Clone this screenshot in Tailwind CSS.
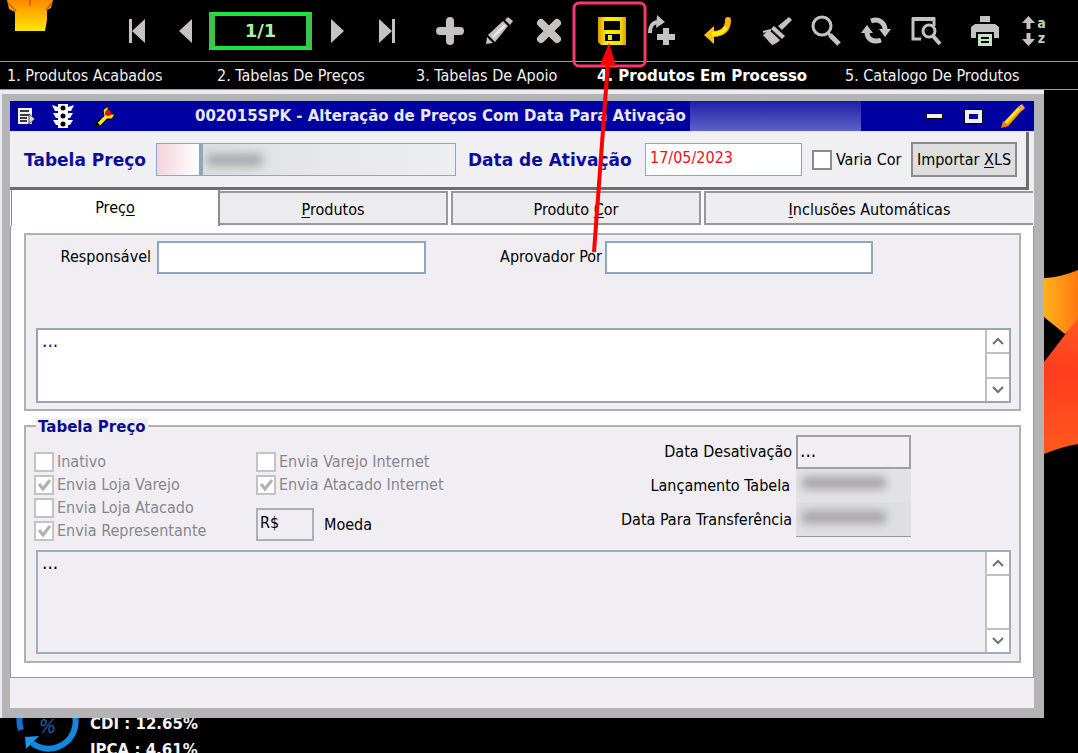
<!DOCTYPE html>
<html lang="pt-BR">
<head>
  <meta charset="UTF-8">
  <meta name="viewport" content="width=device-width, initial-scale=1.0">
  <title>Alteração de Preços</title>
  <script src="https://cdn.jsdelivr.net/npm/@tailwindcss/browser@4"></script>
</head>
<body class="relative flex flex-col h-screen overflow-hidden bg-black text-black text-[16px] leading-5 font-['DejaVu_Sans_Condensed','DejaVu_Sans',sans-serif]">

  <!-- Barra de ferramentas -->
  <header class="flex h-[61px] shrink-0 items-center text-[#c6c2c0]">
    <div class="w-[113px] h-full pl-[6px]">
      <svg class="w-12 h-8" viewBox="0 0 48 32">
        <defs>
          <linearGradient id="mao" x1="0" y1="0" x2="0" y2="1">
            <stop offset="0" stop-color="#ff8a00"/><stop offset="1" stop-color="#ffe600"/>
          </linearGradient>
        </defs>
        <path d="M1 0 H47 L45 8 L41 10 V20 L39 31 H9 V12 L3 9 Z" fill="url(#mao)"/>
        <path d="M24 0 V6 M2 3 L10 11 M46 3 L40 10" stroke="#c85a00" stroke-width="1.5" fill="none"/>
      </svg>
    </div>

    <button aria-label="Primeiro" class="w-12 flex justify-center"><svg class="w-[18px] h-6" viewBox="0 0 18 24" fill="currentColor"><path d="M1 0h3v24H1zM17 0v24L4 12z"/></svg></button>
    <button aria-label="Anterior" class="w-12 flex justify-center"><svg class="w-[13px] h-6" viewBox="0 0 13 24" fill="currentColor"><path d="M13 0v24L0 12z"/></svg></button>
    <output class="w-[103px] h-[38px] border-6 border-[#3fc24b] border-y-[#1fe23c] border-y-4 flex items-center justify-center font-bold font-['DejaVu_Sans',sans-serif] text-[18px] text-[#a6f5a0]">1/1</output>
    <button aria-label="Próximo" class="w-[50px] flex justify-center"><svg class="w-[13px] h-6" viewBox="0 0 13 24" fill="currentColor"><path d="M0 0v24L13 12z"/></svg></button>
    <button aria-label="Último" class="w-[50px] flex justify-center"><svg class="w-[18px] h-6" viewBox="0 0 18 24" fill="currentColor"><path d="M14 0h3v24h-3zM1 0v24L14 12z"/></svg></button>

    <button aria-label="Incluir" class="w-12 ml-[14px] flex justify-center"><svg class="w-7 h-7" viewBox="0 0 28 28" stroke="currentColor" stroke-width="8" stroke-linecap="round"><path d="M14 4v20M4 14h20"/></svg></button>
    <button aria-label="Alterar" class="w-[50px] flex justify-center">
      <svg class="w-7 h-7" viewBox="0 0 28 28" fill="currentColor">
        <path d="M1 27l1-7 6 6zM3 18L18 4l5 5L10 25z"/><path d="M20 3l3-3 5 4-3 4z"/><path d="M8 20L20 8" stroke="#f0eceb" stroke-width="2"/>
      </svg>
    </button>
    <button aria-label="Excluir" class="w-[50px] flex justify-center"><svg class="w-7 h-7" viewBox="0 0 28 28" stroke="currentColor" stroke-width="8" stroke-linecap="round"><path d="M6 6l16 16M22 6L6 22"/></svg></button>
    <button aria-label="Salvar" class="w-[75px] flex justify-center">
      <svg class="w-7 h-7" viewBox="0 0 28 28">
        <defs><linearGradient id="disco" x1="0" y1="0" x2="1" y2="0"><stop offset="0" stop-color="#d99a00"/><stop offset=".3" stop-color="#fff000"/><stop offset=".8" stop-color="#f5dc00"/><stop offset="1" stop-color="#e89a00"/></linearGradient></defs>
        <path fill="url(#disco)" fill-rule="evenodd" d="M0 0H28V28H3L0 25ZM6 4V13H22V4ZM7 17V24H22V17ZM10 18H14V23H10Z"/>
      </svg>
    </button>
    <button aria-label="Duplicar" class="w-[24px] flex justify-center">
      <svg class="w-[27px] h-8 shrink-0" viewBox="0 0 27 32" fill="none" stroke="currentColor">
        <path d="M2 18C2 11 4 8 9 7" stroke-width="4"/><path d="M9 0l8 7-9 6z" fill="currentColor" stroke="none"/><path d="M18 13v17M9 22h18" stroke-width="6"/>
      </svg>
    </button>
    <button aria-label="Desfazer" class="w-12 ml-[20px] flex justify-center">
      <svg class="w-7 h-7" viewBox="0 0 28 28">
        <path d="M25 3C25 12 20 17 10 17" fill="none" stroke="#f8b400" stroke-width="6" stroke-linecap="round"/><path d="M1 18L11 9v18z" fill="#ffc400"/><path d="M23 10c-2 5-7 7-14 7" fill="none" stroke="#fff000" stroke-width="4"/>
      </svg>
    </button>
    <button aria-label="Limpar" class="w-12 ml-[12px] flex justify-center">
      <svg class="w-8 h-8" viewBox="0 0 32 32" fill="currentColor">
        <path d="M28 2l3 3-10 10-4-4z"/><path d="M13 11l11 10-3 3-11-10z"/><path d="M8 15l11 10c-3 3-5 4-8 5L2 20z"/><path d="M2 17l8-2" stroke="currentColor" stroke-width="2"/>
      </svg>
    </button>
    <button aria-label="Pesquisar" class="w-[50px] flex justify-center">
      <svg class="w-8 h-8" viewBox="0 0 32 32" fill="none" stroke="currentColor"><circle cx="12" cy="11" r="9" stroke-width="3"/><path d="M18 18l3 3" stroke-width="3"/><path d="M20 20l9 9" stroke-width="5"/></svg>
    </button>
    <button aria-label="Atualizar" class="w-[50px] flex justify-center">
      <svg class="w-8 h-8" viewBox="0 0 32 32" fill="none" stroke="currentColor" stroke-width="5">
        <path d="M11 6c8-3 14 2 14 9M21 25C13 28 7 24 7 17"/><path d="M19 14h12l-6 8zM1 18h12L7 10z" fill="currentColor" stroke="none"/>
      </svg>
    </button>
    <button aria-label="Visualizar" class="w-[50px] flex justify-center">
      <svg class="w-8 h-8" viewBox="0 0 32 32" fill="none" stroke="currentColor"><path d="M11 24H3V4h21v7" stroke-width="3"/><path d="M2 4h23" stroke-width="4"/><circle cx="19" cy="16" r="6" stroke-width="3"/><path d="M23 21l7 8" stroke-width="4"/></svg>
    </button>
    <button aria-label="Imprimir" class="w-12 ml-[10px] flex justify-center">
      <svg class="w-7 h-8" viewBox="0 0 28 32" fill="currentColor">
        <path d="M9 1h10v6H9z"/><path d="M4 9h20l4 3v11h-5v-6H5v6H0V12z"/><path d="M7 19h14v12H7zM10 22v2h8v-2zM10 26v2h8v-2z" fill-rule="evenodd" fill="#c4e2c4"/>
      </svg>
    </button>
    <button aria-label="Ordenar" class="w-[50px] flex items-center justify-center">
      <svg class="w-[13px] h-8" viewBox="0 0 13 32" fill="currentColor"><path d="M6.500 1L13 8H8.500V14H4.500V8H0zM6.500 31L13 24H8.500V18H4.500V24H0z"/></svg>
      <span class="ml-[2px] text-[14px] leading-[15px] font-bold text-[#b9d6b9]">a<br>z</span>
    </button>
  </header>

  <!-- Menu -->
  <nav class="flex items-center h-[29px] shrink-0 pl-[7px] border-y border-[#9c9c9c] text-[#f0f0f0] whitespace-nowrap">
    <a href="#" class="w-[210px]">1. Produtos Acabados</a>
    <a href="#" class="w-[199px]">2. Tabelas De Preços</a>
    <a href="#" class="w-[181px]">3. Tabelas De Apoio</a>
    <a href="#" class="w-[248px] text-[15px] font-bold font-['DejaVu_Sans',sans-serif] text-white">4. Produtos Em Processo</a>
    <a href="#">5. Catalogo De Produtos</a>
  </nav>

  <div class="flex shrink-0">
    <!-- Janela -->
    <main class="flex-1 min-w-0 bg-[#b4b4b4] border-t-4 border-l-2 border-[#eceaee] pt-[7px] pl-2 pr-[10px] pb-[10px]">
      <div class="flex items-center h-[30px] bg-[#0000a0] text-[#e8e8f6]">
        <svg class="w-[18px] h-5 ml-[7px]" viewBox="0 0 18 20"><path d="M1 2h14v16H1z" fill="#f0f0f0"/><path d="M3 5h9M3 9h9M3 12h7M3 15h7" stroke="#000" stroke-width="1.500"/><path d="M12 8l6 5-6 5z" fill="#ddd" stroke="#223" stroke-width=".8"/></svg>
        <svg class="w-[22px] h-[26px] ml-[17px]" viewBox="0 0 22 26"><path d="M0 2l6 2V1h10v3l6-2-3 6h-3v2h5l-3 5h-2v2h5l-3 5h-2v3H6v-3H4l-3-5h5v-2H4l-3-5h5V8H3z" fill="#fff"/><g fill="#000"><circle cx="11" cy="5" r="2.500"/><circle cx="11" cy="13" r="2.500"/><circle cx="11" cy="21" r="2.500"/></g></svg>
        <svg class="w-[22px] h-[22px] ml-[20px]" viewBox="0 0 22 22"><path d="M2 19l8-8-1-6 5-4 0 5 2 3 5 0-3 5-5 0-8 8z" fill="#f4e61c" stroke="#000" stroke-width="1"/><circle cx="14" cy="8" r="3" fill="#e01010"/><path d="M0 18l4 4 2-2-4-4z" fill="#000"/></svg>
        <h1 class="ml-[79px] text-[15px] font-bold font-['DejaVu_Sans',sans-serif] whitespace-nowrap">002015SPK - Alteração de Preços Com Data Para Ativação</h1>
        <div class="ml-1 w-[171px] h-full bg-linear-to-b from-[#1c1ca4] to-[#6060c8]"></div>
        <div class="ml-auto flex items-center gap-[22px] pr-[9px]">
          <button aria-label="Minimizar" class="w-[17px] h-[6px] border border-black bg-[#f0f0f0]"></button>
          <button aria-label="Restaurar" class="w-[17px] h-[13px] border-4 border-[#f0f0f0] bg-[#0000a0] outline outline-black"></button>
          <svg class="w-[25px] h-[25px] -ml-1" viewBox="0 0 25 25"><path d="M4 18L18 3l4 3L8 22z" fill="#ffe600"/><path d="M7 21L21 6" stroke="#ff9800" stroke-width="2"/><path d="M1 24l2-7 6 5z" fill="#f07a20"/><path d="M18 3l4-3 3 4-3 3z" fill="#f0a060"/></svg>
        </div>
      </div>

      <!-- Cabeçalho do formulário -->
      <div class="bg-[#f0f0f2] border-t border-[#d4eafa] pr-[5px]">
        <div class="flex items-center h-[58px] pl-[14px] pr-[9px] border-b-3 border-r-3 border-[#6e6e70]">
          <label for="tabela" class="w-[132px] text-[17px] font-bold font-['DejaVu_Sans',sans-serif] text-[#0c0c9c] whitespace-nowrap">Tabela Preço</label>
          <input id="tabela" class="w-11 h-[33px] border border-[#8ea6be] bg-linear-to-r from-[#f4d4da] to-white">
          <div class="flex items-center flex-1 min-w-0 h-[33px] pl-1 border border-l-3 border-[#8ea6be] bg-linear-to-r from-[#dcdfe0] via-[#e6e8ea] to-[#eceef0]">
            <input aria-label="Descrição" class="w-14 h-3 rounded bg-[#a4a8aa] blur-[5px]">
          </div>
          <label for="ativacao" class="w-[189px] pl-3 text-[17px] font-bold font-['DejaVu_Sans',sans-serif] text-[#0c0c9c] whitespace-nowrap">Data de Ativação</label>
          <input id="ativacao" value="17/05/2023" class="w-[157px] h-[33px] pl-1 pb-1 border border-[#8ea6be] bg-white text-[#f80c1c]">
          <input id="cor" type="checkbox" class="appearance-none ml-[10px] size-5 border-2 border-[#8c8c8c] bg-white">
          <label for="cor" class="w-[79px] pl-1 whitespace-nowrap">Varia Cor</label>
          <button class="w-[106px] h-[35px] border-2 border-[#8c8c8c] bg-[#dedede] whitespace-nowrap">Importar <u class="underline-offset-2">X</u>LS</button>
        </div>
      </div>

      <!-- Abas -->
      <div role="tablist" class="flex items-end h-9 bg-[#fafafc] pr-px">
        <button role="tab" aria-selected="true" class="w-[209px] h-9 ml-px bg-white border-r-2 border-l border-[#8c8c8e]">Preç<u class="underline-offset-2">o</u></button>
        <button role="tab" class="w-[228px] h-[34px] mb-px bg-[#ececee] border-2 border-l-0 border-[#98989a] pt-1"><u class="underline-offset-2">P</u>rodutos</button>
        <button role="tab" class="w-[250px] h-[34px] mb-px ml-[3px] bg-[#ececee] border-2 border-[#98989a] pt-1">Produto <u class="underline-offset-2">C</u>or</button>
        <button role="tab" class="flex-1 h-[34px] mb-px ml-[3px] bg-[#eeeef0] border-2 border-r-0 border-[#98989a] pt-1"><u class="underline-offset-2">I</u>nclusões Automáticas</button>
      </div>

      <div role="tabpanel" class="bg-white border border-t-0 border-[#98989a] pt-[7px] pl-[13px] pr-3 pb-[14px]">
        <section class="h-[178px] border-2 border-[#b0b0b4] bg-[#f0eef2] pt-[6px] pl-[10px] pr-2">
          <div class="flex items-center">
            <label for="responsavel" class="w-[121px] pr-[6px] pb-[2px] text-right">Responsável</label>
            <input id="responsavel" class="w-[269px] h-[33px] border-2 border-[#8ea6be] bg-white">
            <label for="aprovador" class="w-[179px] pr-[3px] pb-[2px] text-right">Aprovador Por</label>
            <input id="aprovador" class="w-[268px] h-[33px] border-2 border-[#8ea6be] bg-white">
          </div>
          <div class="flex mt-[54px] h-[75px] border-2 border-[#98a6b2] bg-white">
            <textarea aria-label="Observação" class="flex-1 resize-none px-1 text-[19px] text-[#0c0c9c] outline-none overflow-hidden">...</textarea>
            <div class="flex flex-col w-6 border-l-2 border-[#c0c0c2] bg-white">
              <button aria-label="Subir" class="h-6 flex items-center justify-center border-b-2 border-[#c0c0c2]"><svg class="w-3 h-2" viewBox="0 0 12 8"><path d="M1 7l5-5 5 5" fill="none" stroke="#707070" stroke-width="2"/></svg></button>
              <span class="flex-1"></span>
              <button aria-label="Descer" class="h-6 flex items-center justify-center border-t-2 border-[#c0c0c2]"><svg class="w-3 h-2" viewBox="0 0 12 8"><path d="M1 1l5 5 5-5" fill="none" stroke="#707070" stroke-width="2"/></svg></button>
            </div>
          </div>
        </section>

        <fieldset class="h-[238px] mt-[14px] border-2 border-[#b0b0b4] bg-[#f0eef2] pl-[10px] pr-2">
          <legend class="float-left w-full h-2 text-[15px] font-bold font-['DejaVu_Sans',sans-serif] text-[#0c0c8c]"><span class="relative -top-[10px] px-[2px] bg-[#f0eef2]">Tabela Preço</span></legend>
          <div class="clear-both flex h-[115px] text-[#88868c]">
            <div class="w-[220px] pt-[15px] whitespace-nowrap">
              <div class="flex items-center h-[23px]"><input id="inativo" type="checkbox" disabled class="appearance-none size-5 mr-[3px] -ml-[2px] border-2 border-[#c4c2c6] bg-white"><label for="inativo">Inativo</label></div>
              <div class="flex items-center h-[23px]">
                <span class="grid -ml-[2px] mr-[3px]"><input id="loja-varejo" type="checkbox" checked disabled class="[grid-area:1/1] appearance-none size-5 border-2 border-[#c4c2c6] bg-white"><svg class="[grid-area:1/1] size-5" viewBox="0 0 20 20"><path d="M5 9l4 5 7-9" fill="none" stroke="#b0b0b2" stroke-width="3"/></svg></span>
                <label for="loja-varejo">Envia Loja Varejo</label>
              </div>
              <div class="flex items-center h-[23px]"><input id="loja-atacado" type="checkbox" disabled class="appearance-none size-5 mr-[3px] -ml-[2px] border-2 border-[#c4c2c6] bg-white"><label for="loja-atacado">Envia Loja Atacado</label></div>
              <div class="flex items-center h-[23px]">
                <span class="grid -ml-[2px] mr-[3px]"><input id="representante" type="checkbox" checked disabled class="[grid-area:1/1] appearance-none size-5 border-2 border-[#c4c2c6] bg-white"><svg class="[grid-area:1/1] size-5" viewBox="0 0 20 20"><path d="M5 9l4 5 7-9" fill="none" stroke="#b0b0b2" stroke-width="3"/></svg></span>
                <label for="representante">Envia Representante</label>
              </div>
            </div>
            <div class="w-[345px] pt-[15px] whitespace-nowrap">
              <div class="flex items-center h-[23px]"><input id="varejo-net" type="checkbox" disabled class="appearance-none size-5 mr-[3px] border-2 border-[#c4c2c6] bg-white"><label for="varejo-net">Envia Varejo Internet</label></div>
              <div class="flex items-center h-[23px]">
                <span class="grid mr-[3px]"><input id="atacado-net" type="checkbox" checked disabled class="[grid-area:1/1] appearance-none size-5 border-2 border-[#c4c2c6] bg-white"><svg class="[grid-area:1/1] size-5" viewBox="0 0 20 20"><path d="M5 9l4 5 7-9" fill="none" stroke="#b0b0b2" stroke-width="3"/></svg></span>
                <label for="atacado-net">Envia Atacado Internet</label>
              </div>
              <div class="flex items-center mt-3 text-black">
                <input id="moeda" value="R$" readonly class="w-[58px] h-[33px] pl-[2px] pb-1 border-2 border-[#a8b0b8]">
                <label for="moeda" class="pl-[10px]">Moeda</label>
              </div>
            </div>
            <div class="grid grid-cols-[195px_115px] auto-rows-[34px] items-center text-black text-right whitespace-nowrap">
              <label for="desativacao" class="pr-1">Data Desativação</label>
              <input id="desativacao" value="..." readonly class="h-[34px] pl-[2px] pb-1 text-[19px] border-2 border-[#a0a0a4]">
              <label for="lancamento" class="pr-[6px]">Lançamento Tabela</label>
              <div class="h-full bg-[#e2e2e4] pt-2 pl-[6px]"><input id="lancamento" readonly class="block w-[84px] h-3 rounded bg-[#a4a1a4] blur-[5px]"></div>
              <label for="transferencia" class="pr-1">Data Para Transferência</label>
              <div class="h-full bg-[#dedfe1] border-b border-[#98989a] pt-2 pl-[6px]"><input id="transferencia" readonly class="block w-[84px] h-3 rounded bg-[#a4a1a4] blur-[5px]"></div>
            </div>
          </div>
          <div class="flex h-[104px] border-2 border-[#a4acb8] bg-[#f0eef2]">
            <textarea aria-label="Descrição da tabela" readonly class="flex-1 resize-none px-1 text-[19px] outline-none overflow-hidden">...</textarea>
            <div class="flex flex-col w-6 border-l-2 border-[#c0c0c2] bg-white">
              <button aria-label="Subir" class="h-6 flex items-center justify-center border-b-2 border-[#c0c0c2]"><svg class="w-3 h-2" viewBox="0 0 12 8"><path d="M1 7l5-5 5 5" fill="none" stroke="#707070" stroke-width="2"/></svg></button>
              <span class="flex-1"></span>
              <button aria-label="Descer" class="h-6 flex items-center justify-center border-t-2 border-[#c0c0c2]"><svg class="w-3 h-2" viewBox="0 0 12 8"><path d="M1 1l5 5 5-5" fill="none" stroke="#707070" stroke-width="2"/></svg></button>
            </div>
          </div>
        </fieldset>
      </div>

      <!-- Barra de status -->
      <div class="h-[30px] bg-[#f0eef2]"></div>
    </main>

    <!-- Papel de parede -->
    <aside class="w-[34px] pt-[170px]">
      <svg class="w-[34px] h-[200px]" viewBox="0 0 34 200">
        <defs>
          <linearGradient id="amarelo" x1="0" y1="0" x2="1" y2="0"><stop offset="0" stop-color="#ffb01c"/><stop offset="1" stop-color="#ff7a10"/></linearGradient>
          <linearGradient id="vermelho" x1="0" y1="0" x2="0" y2="1"><stop offset="0" stop-color="#ff5a20"/><stop offset=".4" stop-color="#ff3c20"/><stop offset="1" stop-color="#ff5a1e"/></linearGradient>
        </defs>
        <path d="M0 18C12 18 24 14 34 10V62L21 74 0 57z" fill="url(#amarelo)"/>
        <path d="M0 102L34 58V184C22 186 10 190 0 194z" fill="url(#vermelho)"/>
      </svg>
    </aside>
  </div>

  <!-- Indicadores -->
  <footer class="flex flex-1 min-h-0 overflow-hidden text-[#f4f4f4]">
    <svg class="w-[66px] h-[66px] ml-4 -mt-[30px] shrink-0" viewBox="0 0 66 66" fill="none">
      <path d="M5 42A28 28 0 0 1 8 18" stroke="#1070d0" stroke-width="6"/><path d="M59 28A27 27 0 0 1 16 55" stroke="#1088e0" stroke-width="6"/><path d="M9 49l14-1-13 13z" fill="#1c98e8"/>
      <text x="23" y="45" font-size="20" font-style="italic" fill="#1a5cb0">%</text>
    </svg>
    <p class="-mt-[7px] ml-2 text-[15px] font-bold font-['DejaVu_Sans',sans-serif] leading-[26px] whitespace-nowrap">CDI : 12.65%<br>IPCA : 4.61%</p>
  </footer>

  <!-- Destaque no botão salvar -->
  <svg class="absolute left-[570px] top-0 w-20 h-[260px] pointer-events-none" viewBox="0 0 80 260" fill="none">
    <rect x="4" y="3" width="71" height="63" rx="5" stroke="#f8386c" stroke-width="3"/>
    <path d="M24 252L38 62" stroke="#ff0000" stroke-width="4"/>
    <path d="M39 43l7 23-16-1z" fill="#ff0000"/>
  </svg>
</body>
</html>
